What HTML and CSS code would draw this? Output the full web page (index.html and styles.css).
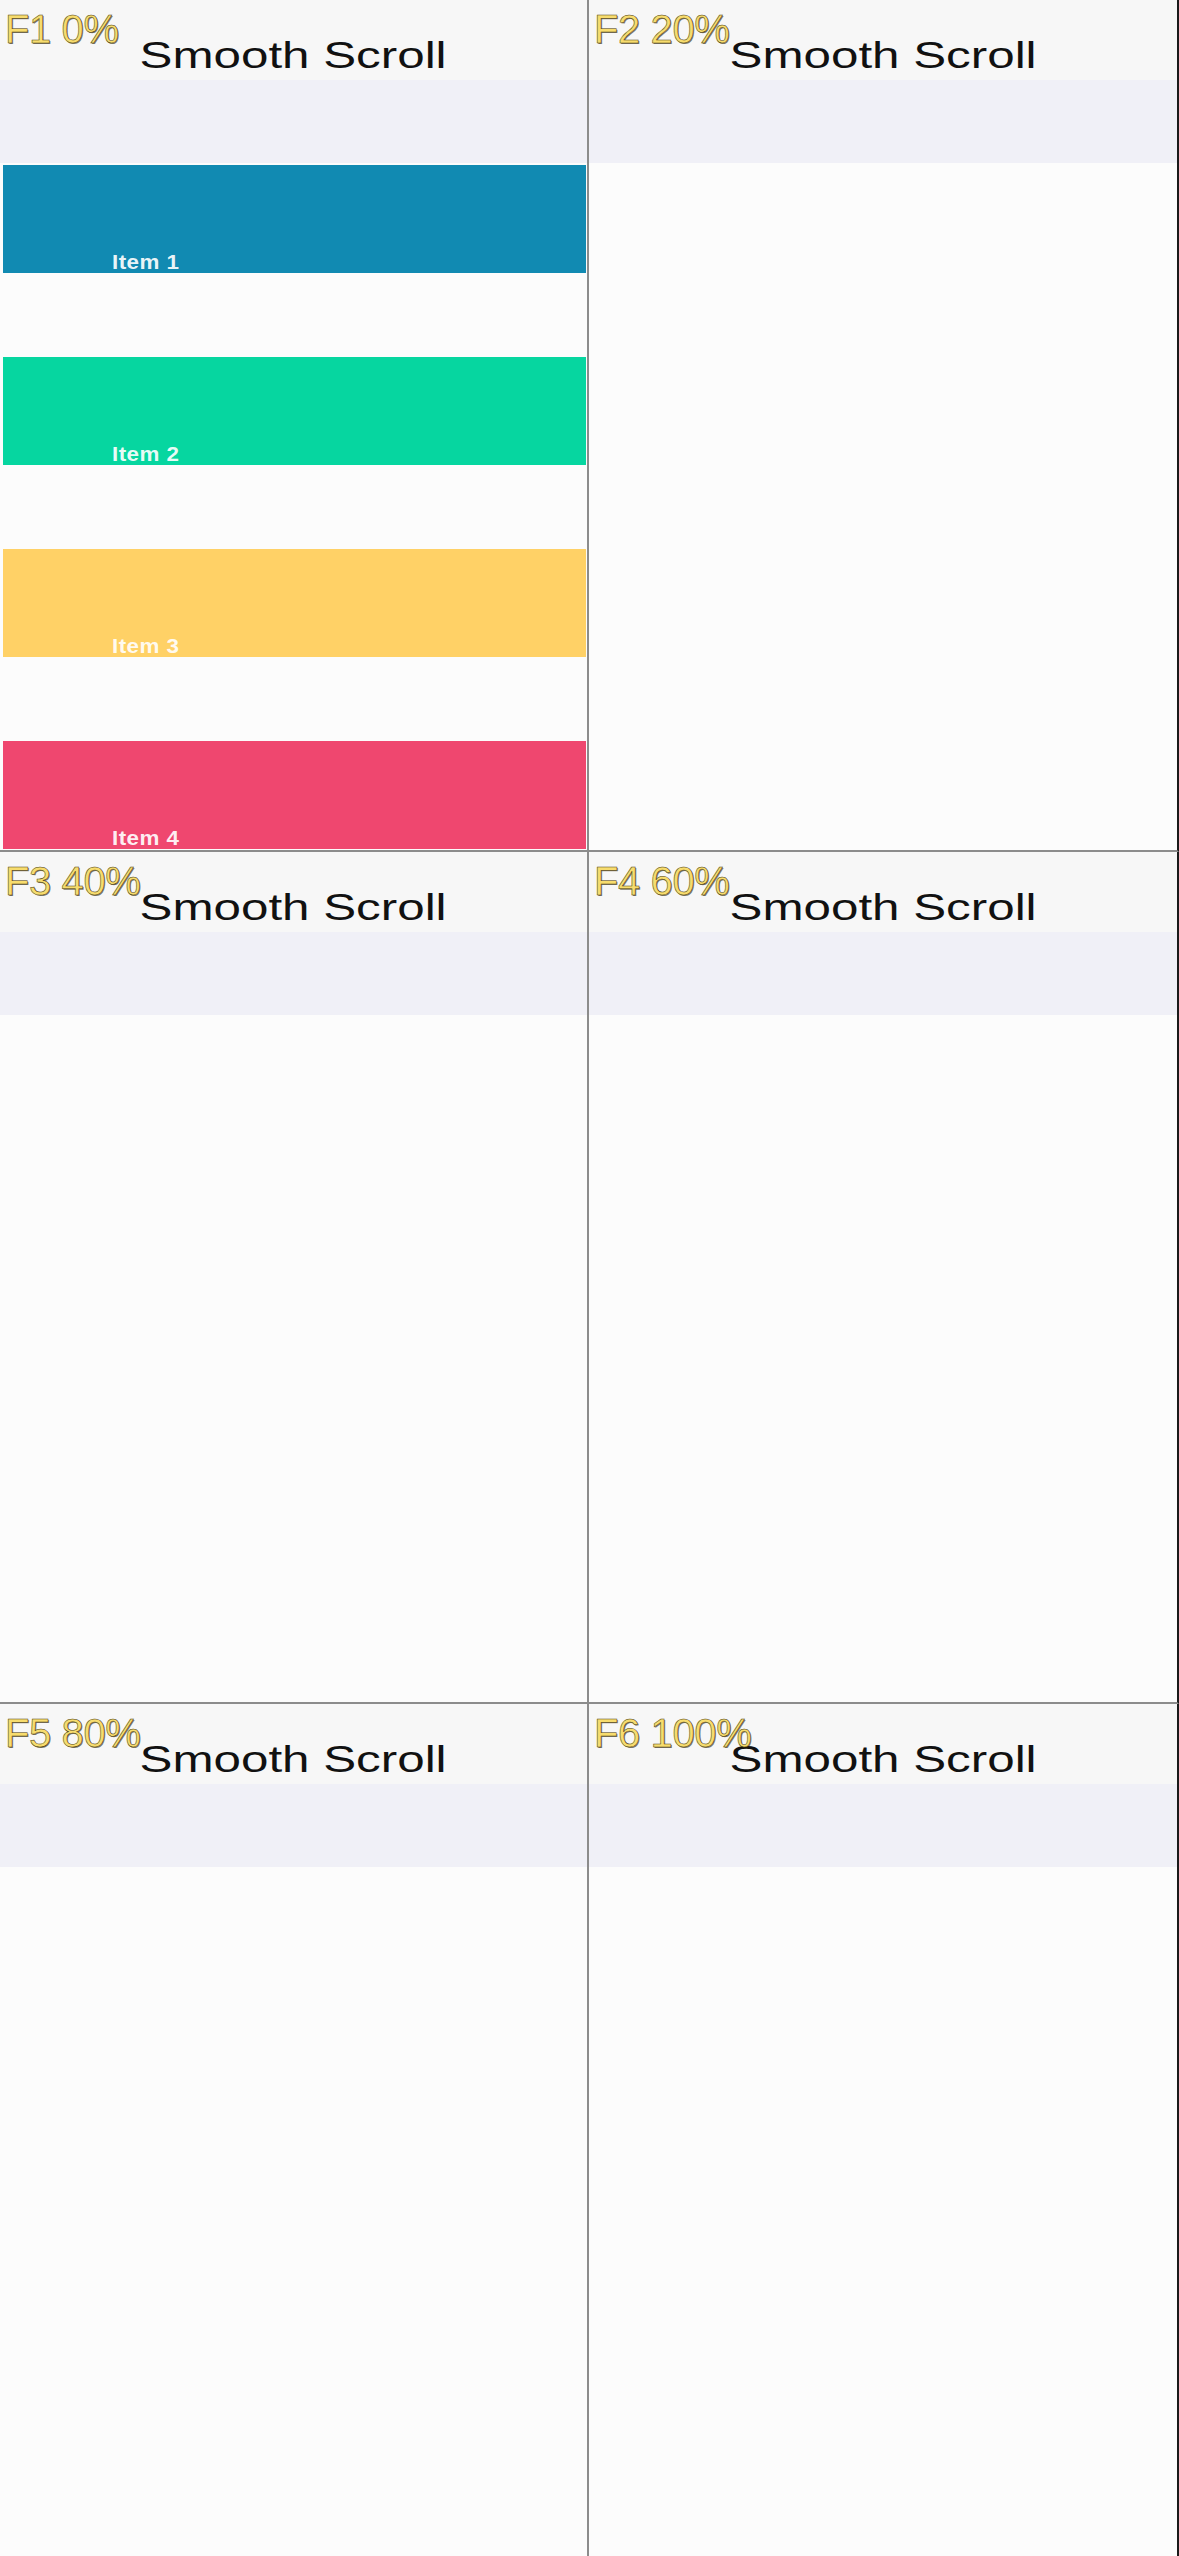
FILE: index.html
```html
<!DOCTYPE html>
<html lang="en">
<head>
  <meta charset="UTF-8">
  <meta name="viewport" content="width=device-width, initial-scale=1.0">
  <title>Smooth Scroll</title>
  <link rel="stylesheet" href="styles.css">
</head>
<body>

<div class="sheet">

  <div class="frame">
    <div class="bar"><span class="title">Smooth Scroll</span></div>
    <div class="band"></div>
    <div class="list">
      <div class="item item-blue"><span>Item 1</span></div>
      <div class="item item-green"><span>Item 2</span></div>
      <div class="item item-yellow"><span>Item 3</span></div>
      <div class="item item-red"><span>Item 4</span></div>
    </div>
    <span class="tag">F1 0%</span>
  </div>

  <div class="frame">
    <div class="bar"><span class="title">Smooth Scroll</span></div>
    <div class="band"></div>
    <span class="tag">F2 20%</span>
  </div>

  <div class="frame">
    <div class="bar"><span class="title">Smooth Scroll</span></div>
    <div class="band"></div>
    <span class="tag">F3 40%</span>
  </div>

  <div class="frame">
    <div class="bar"><span class="title">Smooth Scroll</span></div>
    <div class="band"></div>
    <span class="tag">F4 60%</span>
  </div>

  <div class="frame">
    <div class="bar"><span class="title">Smooth Scroll</span></div>
    <div class="band"></div>
    <span class="tag">F5 80%</span>
  </div>

  <div class="frame">
    <div class="bar"><span class="title">Smooth Scroll</span></div>
    <div class="band"></div>
    <span class="tag">F6 100%</span>
  </div>

</div>

</body>
</html>
```

FILE: styles.css
```css
body {
  margin: 0;
  background-color: #fbfbfb;
  font-family: "Liberation Sans", Arial, sans-serif;
}
.sheet {
  display: grid;
  grid-template-columns: 589px 590px;
  grid-template-rows: 852px 852px 852px;
}
.frame {
  position: relative;
  overflow: hidden;
  background-color: #fcfcfc;
  border-right: 2px solid #8c8c8c;
  border-bottom: 2px solid #8c8c8c;
}
.frame:nth-child(even) {
  border-right-color: #1a1a1a;
}
.frame:nth-child(n+5) {
  border-bottom: none;
}
.bar {
  height: 80px;
  box-sizing: border-box;
  padding-top: 38px;
  background-color: #f7f7f7;
  text-align: center;
}
.title {
  display: inline-block;
  font-size: 36px;
  line-height: 36px;
  color: #111;
  transform: scaleX(1.37);
}
.band {
  height: 83px;
  background-color: #f0f0f7;
}
.list {
  display: flex;
  flex-direction: column;
  gap: 84px;
  padding: 2px 1px 0 3px;
}
.item {
  height: 108px;
  box-sizing: border-box;
  display: flex;
  align-items: flex-end;
  padding: 0 0 1px 109px;
}
.item span {
  display: inline-block;
  font-size: 20px;
  line-height: 20px;
  font-weight: bold;
  letter-spacing: 0.4px;
  color: rgba(255, 255, 255, 0.92);
  transform: scaleX(1.12);
  transform-origin: left bottom;
}
.item-blue {
  background-color: #118ab2;
}
.item-green {
  background-color: #06d6a0;
}
.item-yellow {
  background-color: #ffd166;
}
.item-red {
  background-color: #ef476f;
}
/* frame number overlay */
.tag {
  position: absolute;
  left: 5px;
  top: 9px;
  font-size: 40px;
  line-height: 40px;
  letter-spacing: -0.4px;
  color: #f7dc6e;
  -webkit-text-stroke: 0.5px #4a3c10;
  text-shadow: 1px 1px 0 rgba(40, 30, 0, 0.6);
}
```
